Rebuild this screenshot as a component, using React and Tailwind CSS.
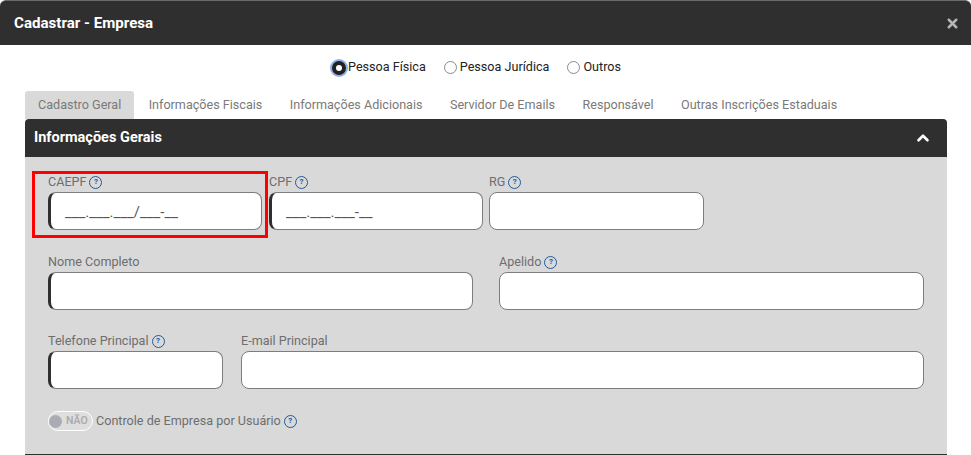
import { X, ChevronUp } from "lucide-react";

function Help() {
  return (
    <span className="w-[13px] h-[13px] rounded-full border-[1.5px] border-[#1f5a9e] flex items-center justify-center text-[8px] font-bold leading-none text-[#1f5a9e] shrink-0">
      ?
    </span>
  );
}

function Field({ label, help, required, mask, width }) {
  return (
    <div className={`${width} shrink-0`}>
      <div className="h-[20px] flex items-center gap-[3px] text-[12.6px] text-[#6e6e6e]">
        <span>{label}</span>
        {help && <Help />}
      </div>
      <div
        className={`h-[38px] bg-white rounded-[8px] border border-[#7d7d7d] flex items-center pl-[14px] ${
          required ? "border-l-[3px] border-l-[#2f2f2f]" : ""
        }`}
      >
        {mask && <span className="text-[15px] text-[#555] pt-[2px]">{mask}</span>}
      </div>
    </div>
  );
}

function Radio({ label, checked }) {
  return (
    <label className={`flex items-center text-[12.6px] text-[#222] ${checked ? "gap-0" : "gap-[3px]"}`}>
      {checked ? (
        <span className="w-[18px] h-[18px] rounded-full bg-[#8fb0ea] flex items-center justify-center mt-[2px]">
          <span className="w-[14px] h-[14px] rounded-full bg-[#222] flex items-center justify-center">
            <span className="w-[6px] h-[6px] rounded-full bg-white" />
          </span>
        </span>
      ) : (
        <span className="w-[13px] h-[13px] rounded-full border border-[#8a8a8a] bg-white mt-[2px]" />
      )}
      <span>{label}</span>
    </label>
  );
}

const TABS = ["Cadastro Geral", "Informações Fiscais", "Informações Adicionais", "Servidor De Emails", "Responsável", "Outras Inscrições Estaduais"];

export default function App() {
  return (
    <div className="w-[971px] h-[455px] overflow-hidden bg-white relative font-['Roboto',sans-serif]">
      <div className="h-[45px] bg-[#2f2f2f] border-t border-t-[#6a6a6a] rounded-t-[6px] flex items-center justify-between pl-[14px] pr-[11px]">
        <span className="text-[15.1px] font-bold text-white">Cadastrar - Empresa</span>
        <X size={15} strokeWidth={4} className="text-[#b5b5b5]" />
      </div>

      <div className="h-[46px] flex items-center justify-center gap-[18px] pr-[20px] pb-[2px]">
        <Radio label="Pessoa Física" checked />
        <Radio label="Pessoa Jurídica" />
        <Radio label="Outros" />
      </div>

      <div className="px-[25px] w-[972px]">
        <div className="flex h-[28px]">
          {TABS.map((t, i) => (
            <div
              key={t}
              className={`h-[28px] px-[13px] pt-[1px] mr-[1.4px] flex items-center text-[12.6px] text-[#7a7a7a] rounded-t-[3px] ${
                i === 0 ? "bg-[#d9d9d9]" : ""
              }`}
            >
              {t}
            </div>
          ))}
        </div>

        <div className="h-[38px] bg-[#2f2f2f] rounded-t-[4px] flex items-center justify-between pl-[9px] pr-[15px]">
          <span className="text-[14.5px] font-bold text-white">Informações Gerais</span>
          <ChevronUp size={18} strokeWidth={3.5} className="text-white" />
        </div>

        <div className="h-[298px] bg-[#d9d9d9] border-b border-b-[#2f2f2f] pt-[15px] pl-[23px] pr-[23px]">
          <div className="flex h-[58px]">
            <Field label="CAEPF" help required mask="___.___.___/___-__" width="w-[214px] mr-[7px]" />
            <Field label="CPF" help required mask="___.___.___-__" width="w-[214px] mr-[6px]" />
            <Field label="RG" help width="w-[215px]" />
          </div>
          <div className="flex justify-between mt-[22px] h-[58px]">
            <Field label="Nome Completo" required width="w-[425px]" />
            <Field label="Apelido" help width="w-[425px]" />
          </div>
          <div className="flex justify-between mt-[21px] h-[58px]">
            <Field label="Telefone Principal" help required width="w-[175px]" />
            <Field label="E-mail Principal" width="w-[683px]" />
          </div>
          <div className="flex items-center mt-[22px] h-[20px] gap-[3px] text-[12.6px] text-[#6e6e6e]">
            <div className="w-[45px] h-[20px] rounded-full bg-[#dedede] border border-white flex items-center gap-[4px] shrink-0">
              <span className="w-[13px] h-[13px] rounded-full bg-[#a9adb3]" />
              <span className="text-[10.5px] font-medium text-[#a9a9a9]">NÃO</span>
            </div>
            <span>Controle de Empresa por Usuário</span>
            <Help />
          </div>
        </div>
      </div>

      <div className="absolute left-[32px] top-[171px] w-[236px] h-[67px] border-[3px] border-[#ff0000] pointer-events-none" />
    </div>
  );
}
